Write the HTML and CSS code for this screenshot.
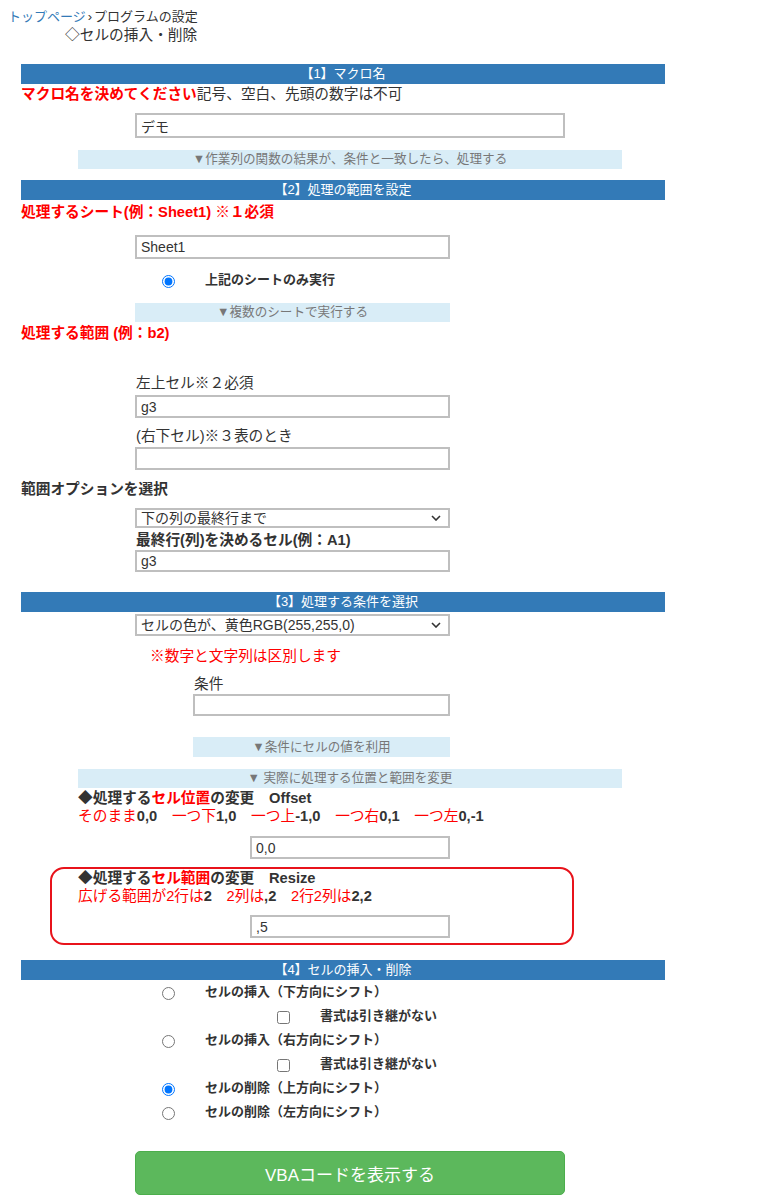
FILE: index.html
```html
<!DOCTYPE html>
<html lang="ja">
<head>
    <meta charset="UTF-8">
    <meta name="viewport" content="width=device-width, initial-scale=1.0">
    <title>セルの挿入・削除 - プログラムの設定</title>
    <link rel="stylesheet" href="styles.css">
</head>
<body>
    <div class="crumb crumb-top"><a href="#" class="crumb-link">トップページ</a><span class="crumb-sep">›</span>プログラムの設定</div>
    <div class="crumb crumb-sub">◇セルの挿入・削除</div>

    <div class="form">
        <!-- 【1】マクロ名 -->
        <div class="bar">【1】マクロ名</div>
        <p class="lead"><span class="must">マクロ名を決めてください</span>記号、空白、先頭の数字は不可</p>
        <input type="text" class="text wide name-input" value="デモ">
        <div class="toggle toggle-wide t-func">▼作業列の関数の結果が、条件と一致したら、処理する</div>

        <!-- 【2】処理の範囲を設定 -->
        <div class="bar bar-range">【2】処理の範囲を設定</div>
        <p class="must sheet-title">処理するシート(例：Sheet1) ※１必須</p>
        <input type="text" class="text mid sheet-input" value="Sheet1">
        <div class="option sheet-only">
            <input type="radio" name="sheet" checked>
            <span>上記のシートのみ実行</span>
        </div>
        <div class="toggle toggle-mid t-sheets">▼複数のシートで実行する</div>
        <p class="must range-title">処理する範囲 (例：b2)</p>

        <p class="label mid-label top-left">左上セル※２必須</p>
        <input type="text" class="text mid cell-input" value="g3">
        <p class="label mid-label bottom-right">(右下セル)※３表のとき</p>
        <input type="text" class="text mid cell-input2" value="">

        <p class="label strong range-opt">範囲オプションを選択</p>
        <div class="select-wrap mid sel-range">
            <select class="select">
                <option>下の列の最終行まで</option>
            </select>
            <svg class="chevron" width="10" height="6" viewBox="0 0 10 6"><polyline points="1,1 5,5 9,1" fill="none" stroke="#333" stroke-width="1.6"/></svg>
        </div>
        <p class="label strong mid-label last-title">最終行(列)を決めるセル(例：A1)</p>
        <input type="text" class="text mid last-input" value="g3">

        <!-- 【3】処理する条件を選択 -->
        <div class="bar bar-cond">【3】処理する条件を選択</div>
        <div class="select-wrap mid sel-cond">
            <select class="select">
                <option>セルの色が、黄色RGB(255,255,0)</option>
            </select>
            <svg class="chevron" width="10" height="6" viewBox="0 0 10 6"><polyline points="1,1 5,5 9,1" fill="none" stroke="#333" stroke-width="1.6"/></svg>
        </div>
        <p class="note">※数字と文字列は区別します</p>
        <p class="label cond-label">条件</p>
        <input type="text" class="text small cond-input" value="">
        <div class="toggle toggle-small t-value">▼条件にセルの値を利用</div>
        <div class="toggle toggle-wide t-change">▼ 実際に処理する位置と範囲を変更</div>

        <p class="label strong indent offset-title">◆処理する<span class="red">セル位置</span>の変更　Offset</p>
        <p class="hint indent">そのまま<b>0,0</b>　一つ下<b>1,0</b>　一つ上<b>-1,0</b>　一つ右<b>0,1</b>　一つ左<b>0,-1</b></p>
        <input type="text" class="text short offset-input" value="0,0">

        <div class="resize-box">
            <p class="label strong">◆処理する<span class="red">セル範囲</span>の変更　Resize</p>
            <p class="hint">広げる範囲が2行は<b>2</b>　2列は<b>,2</b>　2行2列は<b>2,2</b></p>
            <input type="text" class="text short resize-input" value=",5">
        </div>

        <!-- 【4】セルの挿入・削除 -->
        <div class="bar bar-insert">【4】セルの挿入・削除</div>
        <div class="choices">
            <label class="option"><input type="radio" name="mode"><span>セルの挿入（下方向にシフト）</span></label>
            <label class="option sub"><input type="checkbox"><span>書式は引き継がない</span></label>
            <label class="option"><input type="radio" name="mode"><span>セルの挿入（右方向にシフト）</span></label>
            <label class="option sub"><input type="checkbox"><span>書式は引き継がない</span></label>
            <label class="option"><input type="radio" name="mode" checked><span>セルの削除（上方向にシフト）</span></label>
            <label class="option"><input type="radio" name="mode"><span>セルの削除（左方向にシフト）</span></label>
        </div>

        <button class="btn-code">VBAコードを表示する</button>
    </div>
</body>
</html>
```

FILE: styles.css
```css
body {
    margin: 0;
    padding: 8px;
    font-family: "Liberation Sans", "Noto Sans CJK JP", sans-serif;
    font-size: 14.7px;
    color: #333;
    background: #fff;
}

p {
    margin: 0;
}

.crumb {
    line-height: 18px;
}

.crumb-top {
    font-size: 13px;
}

.crumb-link {
    color: #337ab7;
    text-decoration: none;
}

.crumb-sep {
    margin: 0 2px;
}

.crumb-sub {
    padding-left: 57px;
}

.form {
    width: 644px;
    margin: 20px 0 0 13px;
}

/* 見出しバー */
.bar {
    background: #337ab7;
    color: #fff;
    text-align: center;
    height: 20px;
    line-height: 20px;
    font-size: 13px;
}

.bar-range { margin-top: 11px; }
.bar-cond { margin-top: 20px; }
.bar-insert { margin-top: 15px; }

.lead {
    line-height: 18px;
    margin-top: 1px;
}

.must {
    color: #f00;
    font-weight: bold;
}

.red {
    color: #f00;
}

.sheet-title {
    line-height: 24px;
}

.range-title {
    line-height: 22px;
}

/* 入力欄 */
.text {
    display: block;
    box-sizing: border-box;
    border: 2px solid #bfbfbf;
    padding: 0 4px;
    font-family: inherit;
    font-size: 14px;
    color: #333;
    outline: none;
    background: #fff;
}

.wide { margin-left: 114px; width: 430px; }
.mid { margin-left: 114px; width: 315px; }
.small { margin-left: 172px; width: 257px; }
.short { margin-left: 229px; width: 200px; }

.name-input { margin-top: 10px; height: 25px; }
.sheet-input { margin-top: 11px; height: 24px; }
.cell-input { margin-top: 3px; height: 23px; }
.cell-input2 { margin-top: 2px; height: 23px; }
.last-input { margin-top: 1px; height: 22px; }
.cond-input { margin-top: 1px; height: 22px; }
.offset-input { margin-top: 11px; height: 23px; }

/* 開閉バー */
.toggle {
    background: #d9edf7;
    color: #777;
    text-align: center;
    font-size: 12.6px;
    height: 19px;
    line-height: 19px;
}

.toggle-wide { margin-left: 57px; width: 544px; }
.toggle-mid { margin-left: 114px; width: 315px; }
.toggle-small { margin-left: 172px; width: 257px; }

.t-func { margin-top: 12px; }
.t-sheets { margin-top: 14px; }
.t-value { margin-top: 21px; height: 20px; line-height: 20px; }
.t-change { margin-top: 12px; }

/* ラベル */
.label {
    line-height: 18px;
}

.strong {
    font-weight: bold;
}

.mid-label {
    margin-left: 115px;
}

.indent {
    margin-left: 57px;
}

.top-left { margin-top: 30px; }
.bottom-right { margin-top: 9px; }
.range-opt { margin-top: 10px; }
.last-title { margin-top: 3px; }
.cond-label { margin-left: 173px; margin-top: 10px; }
.offset-title { margin-top: 1px; }

.note {
    color: #f00;
    line-height: 18px;
    margin: 11px 0 0 129px;
}

.hint {
    color: #f00;
    line-height: 18px;
}

.hint b {
    color: #333;
}

/* セレクト */
.select-wrap {
    position: relative;
}

.select {
    display: block;
    width: 100%;
    height: 100%;
    box-sizing: border-box;
    border: 2px solid #bfbfbf;
    border-radius: 0;
    padding: 0 20px 0 4px;
    appearance: none;
    -webkit-appearance: none;
    background: #fff;
    font-family: inherit;
    font-size: 14px;
    color: #333;
}

.chevron {
    position: absolute;
    right: 9px;
    top: 50%;
    margin-top: -3px;
    pointer-events: none;
}

.sel-range { margin-top: 10px; height: 20px; }
.sel-cond { margin-top: 2px; height: 22px; }

/* ラジオ・チェック */
.option {
    display: flex;
    align-items: center;
    margin-left: 141px;
    height: 24px;
    font-weight: bold;
    font-size: 13px;
}

.option input {
    width: 13px;
    height: 13px;
    margin: 6px 30px 0 0;
    flex: none;
}

.option.sub {
    margin-left: 256px;
}

.sheet-only {
    margin-top: 8px;
    height: 22px;
}

.choices {
    margin-top: -2px;
}

/* Resize の枠 */
.resize-box {
    margin: 8px 0 0 29px;
    width: 524px;
    box-sizing: border-box;
    border: 2px solid #e8131b;
    border-radius: 14px;
    padding: 0 0 5px 26px;
}

.resize-input {
    margin-left: 172px;
    margin-top: 10px;
    height: 23px;
}

/* ボタン */
.btn-code {
    display: block;
    margin: 29px 0 0 114px;
    width: 430px;
    height: 44px;
    background: #5cb85c;
    border: 1px solid #4cae4c;
    border-radius: 5px;
    color: #fff;
    font-family: inherit;
    font-size: 17px;
    cursor: pointer;
}
```
